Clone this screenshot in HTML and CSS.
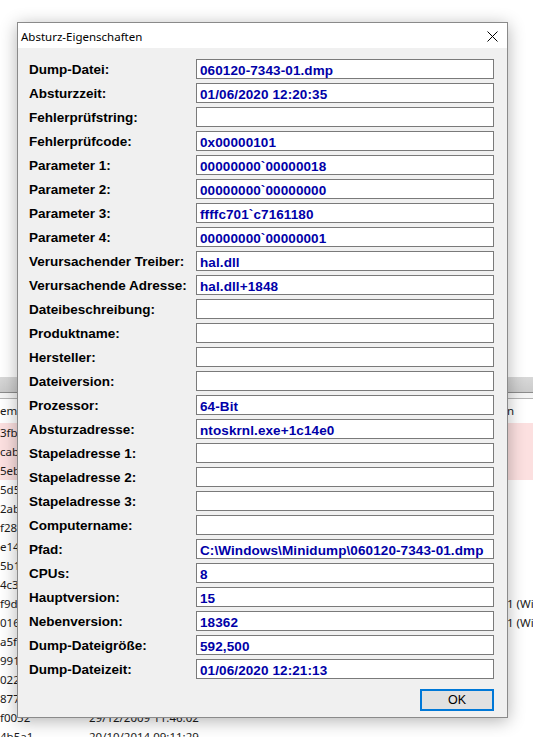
FILE: index.html
```html
<!DOCTYPE html>
<html lang="de">
<head>
<meta charset="utf-8">
<title>Absturz-Eigenschaften</title>
<link rel="stylesheet" href="styles.css">
</head>
<body>
<div class="bg">
  <div class="bg-top"></div>
  <div class="bg-toolbar"></div>
  <div class="bg-sep"></div>
  <div class="bg-head">
    <div class="c1">emp</div><div class="c2"></div><div class="c3">n</div>
  </div>
  <div class="bg-rows">
    <div class="row hl"><div class="c1">3fb</div><div class="c2"></div><div class="c3"></div></div>
    <div class="row hl"><div class="c1">cab</div><div class="c2"></div><div class="c3"></div></div>
    <div class="row hl"><div class="c1">5eb</div><div class="c2"></div><div class="c3"></div></div>
    <div class="row"><div class="c1">5d5</div><div class="c2"></div><div class="c3"></div></div>
    <div class="row"><div class="c1">2ab</div><div class="c2"></div><div class="c3"></div></div>
    <div class="row"><div class="c1">f28</div><div class="c2"></div><div class="c3"></div></div>
    <div class="row"><div class="c1">e14</div><div class="c2"></div><div class="c3"></div></div>
    <div class="row"><div class="c1">5b1</div><div class="c2"></div><div class="c3"></div></div>
    <div class="row"><div class="c1">4c3</div><div class="c2"></div><div class="c3"></div></div>
    <div class="row"><div class="c1">f9d</div><div class="c2"></div><div class="c3">1 (Wi</div></div>
    <div class="row"><div class="c1">016</div><div class="c2"></div><div class="c3">1 (Wi</div></div>
    <div class="row"><div class="c1">a5f</div><div class="c2"></div><div class="c3"></div></div>
    <div class="row"><div class="c1">991</div><div class="c2"></div><div class="c3"></div></div>
    <div class="row"><div class="c1">022</div><div class="c2"></div><div class="c3"></div></div>
    <div class="row"><div class="c1">877</div><div class="c2"></div><div class="c3"></div></div>
    <div class="row"><div class="c1">f0052</div><div class="c2">29/12/2009 11:46:02</div><div class="c3"></div></div>
    <div class="row"><div class="c1">4b5a1</div><div class="c2">20/10/2014 09:11:29</div><div class="c3"></div></div>
  </div>
</div>

<div class="dialog">
  <div class="titlebar">
    <span class="title">Absturz-Eigenschaften</span>
    <svg class="close" width="11" height="11" viewBox="0 0 11 11"><path d="M0.5 0.5 L10.5 10.5 M10.5 0.5 L0.5 10.5" stroke="#000" stroke-width="1" fill="none"/></svg>
  </div>
  <div class="content">
    <div class="props">
      <div class="label">Dump-Datei:</div><div class="field">060120-7343-01.dmp</div>
      <div class="label">Absturzzeit:</div><div class="field">01/06/2020 12:20:35</div>
      <div class="label">Fehlerprüfstring:</div><div class="field"></div>
      <div class="label">Fehlerprüfcode:</div><div class="field">0x00000101</div>
      <div class="label">Parameter 1:</div><div class="field">00000000`00000018</div>
      <div class="label">Parameter 2:</div><div class="field">00000000`00000000</div>
      <div class="label">Parameter 3:</div><div class="field">ffffc701`c7161180</div>
      <div class="label">Parameter 4:</div><div class="field">00000000`00000001</div>
      <div class="label">Verursachender Treiber:</div><div class="field">hal.dll</div>
      <div class="label">Verursachende Adresse:</div><div class="field">hal.dll+1848</div>
      <div class="label">Dateibeschreibung:</div><div class="field"></div>
      <div class="label">Produktname:</div><div class="field"></div>
      <div class="label">Hersteller:</div><div class="field"></div>
      <div class="label">Dateiversion:</div><div class="field"></div>
      <div class="label">Prozessor:</div><div class="field">64-Bit</div>
      <div class="label">Absturzadresse:</div><div class="field">ntoskrnl.exe+1c14e0</div>
      <div class="label">Stapeladresse 1:</div><div class="field"></div>
      <div class="label">Stapeladresse 2:</div><div class="field"></div>
      <div class="label">Stapeladresse 3:</div><div class="field"></div>
      <div class="label">Computername:</div><div class="field"></div>
      <div class="label">Pfad:</div><div class="field">C:\Windows\Minidump\060120-7343-01.dmp</div>
      <div class="label">CPUs:</div><div class="field">8</div>
      <div class="label">Hauptversion:</div><div class="field">15</div>
      <div class="label">Nebenversion:</div><div class="field">18362</div>
      <div class="label">Dump-Dateigröße:</div><div class="field">592,500</div>
      <div class="label">Dump-Dateizeit:</div><div class="field">01/06/2020 12:21:13</div>
    </div>
    <div class="actions">
      <button class="ok" type="button">OK</button>
    </div>
  </div>
</div>
</body>
</html>
```

FILE: styles.css
```css
* { box-sizing: border-box; }

html, body {
  margin: 0;
  padding: 0;
}

body {
  width: 533px;
  height: 737px;
  overflow: hidden;
  background: #ffffff;
  position: relative;
  font-family: "Noto Sans", "Liberation Sans", sans-serif;
}

/* ---------- background window ---------- */
.bg {
  width: 533px;
}

.bg-top {
  height: 377px;
  background: #ffffff;
}

.bg-toolbar {
  height: 15px;
  background: linear-gradient(#d8d8d8, #cbcbcb);
}

.bg-sep {
  height: 7px;
  border-top: 1px solid #8c8c8c;
  border-bottom: 1px solid #b4b4b4;
  background: #f4f4f4;
}

.bg-head,
.row {
  display: grid;
  grid-template-columns: 88px 419px 1fr;
  font-size: 11.5px;
  color: #1a1a1a;
  white-space: nowrap;
}

.bg-head {
  height: 24px;
  line-height: 24px;
  background: #ffffff;
}

.row {
  height: 19px;
  line-height: 19px;
}

.row.hl {
  background: #fce0e0;
}

.c1, .c2, .c3 {
  overflow: hidden;
}

.c2 {
  padding-left: 1px;
}

/* ---------- dialog ---------- */
.dialog {
  position: absolute;
  left: 17px;
  top: 22px;
  width: 491px;
  border: 1px solid #8a8a8a;
  background: #f0f0f0;
  box-shadow: 0 3px 16px rgba(0, 0, 0, 0.3);
}

.titlebar {
  height: 25px;
  background: #ffffff;
  display: flex;
  align-items: center;
  justify-content: space-between;
  padding: 0 9px 0 3px;
}

.title {
  font-family: "Noto Sans", "Liberation Sans", sans-serif;
  font-size: 11.5px;
  color: #000000;
  padding-top: 1px;
}

.close {
  display: block;
  margin-top: 1px;
}

.content {
  padding: 11px 13px 6px 11px;
}

.props {
  display: grid;
  grid-template-columns: 167px 298px;
  grid-auto-rows: 20px;
  row-gap: 4px;
  font-family: "Liberation Sans", Arial, sans-serif;
  font-weight: bold;
  font-size: 13.5px;
}

.label {
  color: #000000;
  line-height: 21px;
  white-space: nowrap;
}

.field {
  height: 20px;
  background: #ffffff;
  border: 1px solid #7a7a7a;
  color: #0000a8;
  padding: 2px 0 0 3px;
  line-height: 17px;
  white-space: nowrap;
  overflow: hidden;
  letter-spacing: 0.1px;
}

.actions {
  display: flex;
  justify-content: flex-end;
  padding-top: 10px;
}

.ok {
  width: 74px;
  height: 22px;
  margin: 0;
  padding: 0;
  background: #e1e1e1;
  border: 2px solid #0078d7;
  border-radius: 0;
  font-family: "Liberation Sans", Arial, sans-serif;
  font-size: 12.5px;
  color: #000000;
  line-height: 18px;
}
```
